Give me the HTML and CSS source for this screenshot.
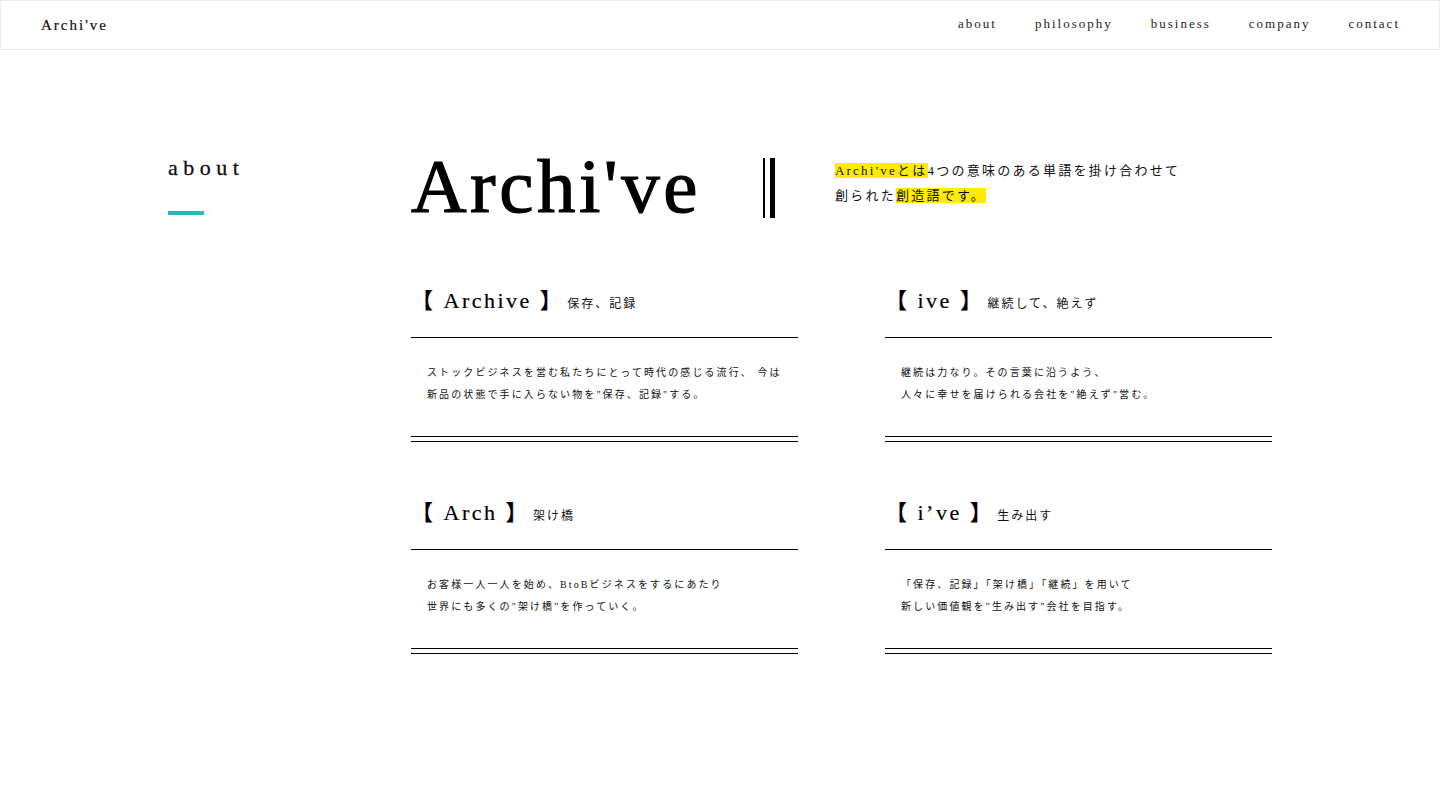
FILE: index.html
```html
<!DOCTYPE html>
<html lang="ja">
<head>
<meta charset="utf-8">
<title>Archi've - about</title>
<link rel="stylesheet" href="styles.css">
</head>
<body>
<header class="site-header">
  <div class="logo">Archi've</div>
  <nav>
    <ul class="nav-list">
      <li>about</li>
      <li>philosophy</li>
      <li>business</li>
      <li>company</li>
      <li>contact</li>
    </ul>
  </nav>
</header>
<main class="about">
  <aside class="side">
    <h2 class="side-title">about</h2>
    <div class="side-bar"></div>
  </aside>
  <section class="content">
    <div class="hero">
      <h1 class="hero-title">Archi've</h1>
      <div class="hero-bar"></div>
      <p class="hero-text"><span class="mark">Archi'veとは</span>4つの意味のある単語を掛け合わせて<br>創られた<span class="mark">創造語です。</span></p>
    </div>
    <div class="cards">
      <article class="card">
        <h3 class="card-head"><span class="card-title">【 Archive 】</span><span class="card-sub">保存、記録</span></h3>
        <p class="card-body">ストックビジネスを営む私たちにとって時代の感じる流行、 今は<br>新品の状態で手に入らない物を"保存、記録"する。</p>
      </article>
      <article class="card">
        <h3 class="card-head"><span class="card-title">【 ive 】</span><span class="card-sub">継続して、絶えず</span></h3>
        <p class="card-body">継続は力なり。その言葉に沿うよう、<br>人々に幸せを届けられる会社を"絶えず"営む。</p>
      </article>
      <article class="card">
        <h3 class="card-head"><span class="card-title">【 Arch 】</span><span class="card-sub">架け橋</span></h3>
        <p class="card-body">お客様一人一人を始め、BtoBビジネスをするにあたり<br>世界にも多くの"架け橋"を作っていく。</p>
      </article>
      <article class="card">
        <h3 class="card-head"><span class="card-title">【 i’ve 】</span><span class="card-sub">生み出す</span></h3>
        <p class="card-body">「保存、記録」「架け橋」「継続」を用いて<br>新しい価値観を"生み出す"会社を目指す。</p>
      </article>
    </div>
  </section>
</main>
</body>
</html>
```

FILE: styles.css
```css
* {
  box-sizing: border-box;
}

body {
  margin: 0;
  background: #fff;
  color: #111;
  font-family: "Liberation Serif", "Noto Sans CJK JP", serif;
}

h1, h2, h3, p, ul {
  margin: 0;
  padding: 0;
  font-weight: normal;
}

.site-header {
  height: 50px;
  border: 1px solid #ececec;
  display: flex;
  align-items: center;
  justify-content: space-between;
  padding: 0 39px 0 40px;
}

.logo {
  font-size: 15px;
  letter-spacing: 2px;
  color: #111;
  -webkit-text-stroke: 0.2px #111;
}

.nav-list {
  list-style: none;
  display: flex;
  gap: 38px;
  font-size: 13px;
  letter-spacing: 2px;
  color: #222;
  margin-top: -2px;
}

.about {
  width: 1104px;
  margin: 0 auto;
  display: flex;
  padding-top: 94px;
  padding-bottom: 120px;
}

.side {
  width: 243px;
  flex: none;
}

.side-title {
  font-size: 22px;
  line-height: 30px;
  letter-spacing: 5.5px;
  margin-top: 9px;
  color: #111;
  -webkit-text-stroke: 0.3px #111;
}

.side-bar {
  width: 36px;
  height: 4px;
  background: #2bb8bb;
  margin-top: 28px;
}

.content {
  flex: 1;
}

.hero {
  display: flex;
  align-items: flex-start;
}

.hero-title {
  font-size: 77px;
  line-height: 78px;
  letter-spacing: 3.5px;
  margin-top: 3px;
  color: #000;
  -webkit-text-stroke: 1.2px #000;
}

.hero-bar {
  width: 12px;
  height: 60px;
  border-left: 2px solid #000;
  border-right: 5px solid #000;
  margin-left: 62px;
  margin-top: 14px;
}

.hero-text {
  margin-left: 60px;
  margin-top: 14px;
  font-size: 13px;
  line-height: 25px;
  letter-spacing: 2.25px;
  color: #111;
}

.mark {
  background: #ffeb00;
}

.cards {
  display: grid;
  grid-template-columns: 387px 387px;
  column-gap: 87px;
  row-gap: 56px;
  margin-top: 61px;
}

.card {
  border-bottom: 1px solid #000;
  padding-bottom: 4px;
}

.card-head {
  display: flex;
  align-items: baseline;
  padding: 0 0 21px;
  border-bottom: 1px solid #000;
}

.card-title {
  font-size: 22px;
  line-height: 30px;
  letter-spacing: 2.5px;
  color: #000;
  -webkit-text-stroke: 0.2px #000;
}

.card-sub {
  font-size: 12px;
  letter-spacing: 2px;
  margin-left: 3px;
  color: #111;
}

.card-body {
  padding: 24px 16px 30px;
  border-bottom: 1px solid #000;
  font-size: 10px;
  line-height: 22px;
  letter-spacing: 2.1px;
  color: #111;
}
```
